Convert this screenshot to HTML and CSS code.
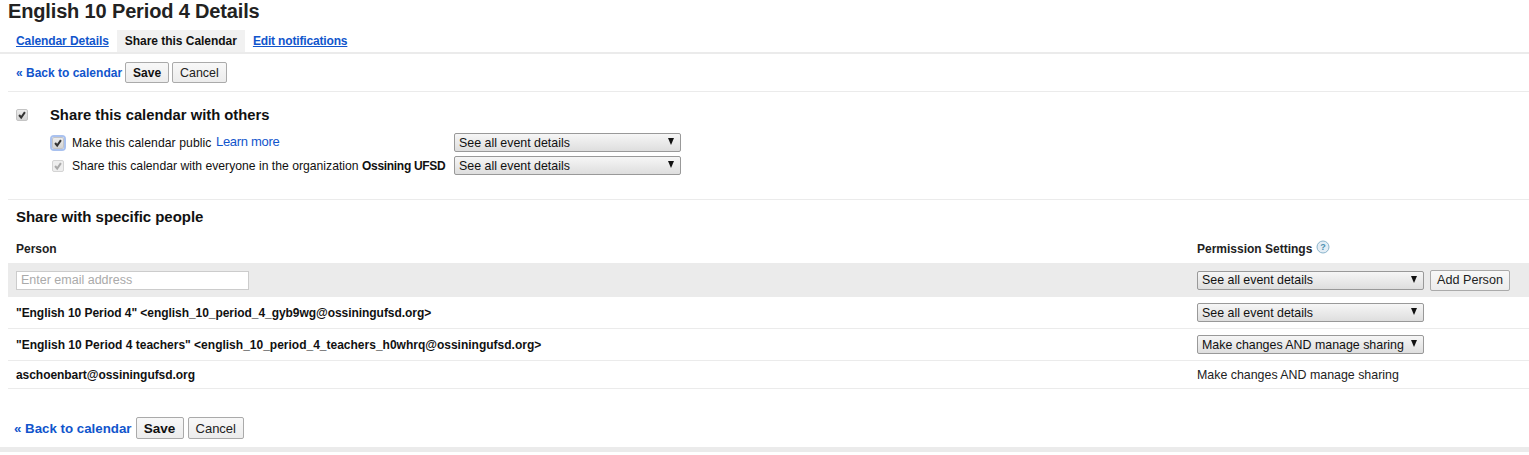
FILE: index.html
```html
<!DOCTYPE html>
<html lang="en">
<head>
  <meta charset="UTF-8">
  <title>English 10 Period 4 Details</title>
  <link rel="stylesheet" href="styles.css">
</head>
<body>

  <h1 class="page-title">English 10 Period 4 Details</h1>

  <!-- Tabs -->
  <div class="tabs">
    <a class="tab" href="#">Calendar Details</a>
    <span class="tab tab-active">Share this Calendar</span>
    <a class="tab tab-tight" href="#">Edit notifications</a>
  </div>

  <div class="toolbar">
    <a class="back-link" href="#">« Back to calendar</a>
    <button class="btn btn-save">Save</button>
    <button class="btn">Cancel</button>
  </div>

  <!-- Share with others -->
  <div class="share-section">
    <div class="share-head">
      <span class="check">
        <svg viewBox="0 0 12 12"><path d="M2.5 6 L5 9 L9.5 2.5" /></svg>
      </span>
      <h3 class="share-title">Share this calendar with others</h3>
    </div>
    <div class="share-row">
      <span class="check check-focus">
        <svg viewBox="0 0 12 12"><path d="M2.5 6 L5 9 L9.5 2.5" /></svg>
      </span>
      <span class="share-label share-label-public">Make this calendar public <a class="learn-more" href="#">Learn more</a></span>
      <div class="select"><span>See all event details</span><i class="arrow"></i></div>
    </div>
    <div class="share-row">
      <span class="check check-disabled">
        <svg viewBox="0 0 12 12"><path d="M2.5 6 L5 9 L9.5 2.5" /></svg>
      </span>
      <span class="share-label">Share this calendar with everyone in the organization <b>Ossining UFSD</b></span>
      <div class="select"><span>See all event details</span><i class="arrow"></i></div>
    </div>
  </div>

  <!-- Share with people -->
  <div class="people-section">
    <h3 class="people-title">Share with specific people</h3>

    <div class="people-head">
      <span class="col-person">Person</span>
      <span class="col-perm">Permission Settings
        <svg class="help-icon" viewBox="0 0 14 14">
          <circle cx="7" cy="7" r="6" />
          <text x="7" y="10.2">?</text>
        </svg>
      </span>
    </div>

    <div class="person-row person-add">
      <div class="col-person"><input class="email-input" type="text" placeholder="Enter email address"></div>
      <div class="col-perm">
        <div class="select"><span>See all event details</span><i class="arrow"></i></div>
        <button class="btn btn-add">Add Person</button>
      </div>
    </div>

    <div class="person-row">
      <div class="col-person person-name person-name-tight">"English 10 Period 4" &lt;english_10_period_4_gyb9wg@ossiningufsd.org&gt;</div>
      <div class="col-perm">
        <div class="select"><span>See all event details</span><i class="arrow"></i></div>
      </div>
    </div>

    <div class="person-row">
      <div class="col-person person-name">"English 10 Period 4 teachers" &lt;english_10_period_4_teachers_h0whrq@ossiningufsd.org&gt;</div>
      <div class="col-perm">
        <div class="select"><span>Make changes AND manage sharing</span><i class="arrow"></i></div>
      </div>
    </div>

    <div class="person-row person-owner">
      <div class="col-person person-name person-name-tight">aschoenbart@ossiningufsd.org</div>
      <div class="col-perm">Make changes AND manage sharing</div>
    </div>
  </div>

  <div class="toolbar-bottom">
    <a class="back-link" href="#">« Back to calendar</a>
    <button class="btn btn-save">Save</button>
    <button class="btn">Cancel</button>
  </div>

  <div class="page-foot"></div>

</body>
</html>
```

FILE: styles.css
```css
html, body {
  margin: 0;
  padding: 0;
  overflow: hidden;
}

body {
  font-family: "Liberation Sans", Arial, sans-serif;
  font-size: 13px;
  color: #222;
  background-color: #fff;
}

a {
  color: #15c;
}

.page-title {
  margin: 0;
  padding-left: 8px;
  height: 30px;
  line-height: 22px;
  font-size: 20px;
  font-weight: bold;
  letter-spacing: -0.15px;
  color: #222;
}

.tabs {
  display: flex;
  height: 22px;
  padding-left: 8px;
  border-bottom: 2px solid #ebebeb;
}

.tab {
  padding: 0 8px;
  line-height: 23px;
  font-size: 12px;
  font-weight: bold;
  letter-spacing: -0.08px;
}

.tab-active {
  background-color: #f1f1f1;
  letter-spacing: -0.03px;
  color: #111;
}

.tab-tight {
  letter-spacing: -0.16px;
}

.toolbar {
  display: flex;
  align-items: center;
  gap: 3px;
  height: 37px;
  margin-left: 8px;
  padding-left: 8px;
  border-bottom: 1px solid #ebebeb;
}

.back-link {
  font-size: 12px;
  font-weight: bold;
  text-decoration: none;
}

.btn {
  height: 21px;
  padding: 0 7px;
  border: 1px solid #aaa;
  border-radius: 2px;
  background: linear-gradient(#f8f8f8, #ececec);
  font-family: inherit;
  font-size: 12.4px;
  color: #222;
}

.btn-save {
  font-size: 12px;
  font-weight: bold;
  color: #111;
}

.share-section {
  margin-left: 8px;
  padding: 15px 0 22px 8px;
  border-bottom: 1px solid #ebebeb;
}

.share-head {
  display: flex;
  align-items: center;
  height: 16px;
  margin-bottom: 8px;
}

.share-title {
  margin: 0 0 0 22px;
  font-size: 14.8px;
  font-weight: bold;
  color: #111;
}

.check {
  display: flex;
  flex: none;
  box-sizing: border-box;
  width: 12px;
  height: 12px;
  border: 1px solid #c4c4c4;
  border-radius: 2px;
  background: linear-gradient(#ededed, #d4d4d4);
}

.check svg {
  width: 10px;
  height: 10px;
  fill: none;
  stroke: #333;
  stroke-width: 2.4;
}

.check-focus {
  outline: 2px solid #a9c1ef;
}

.check-disabled {
  background: #eee;
  border-color: #d4d4d4;
}

.check-disabled svg {
  stroke: #aaa;
}

.share-row {
  display: flex;
  align-items: center;
  height: 23px;
  padding-left: 36px;
}

.share-label {
  width: 382px;
  margin-left: 8px;
  font-size: 12.2px;
  white-space: nowrap;
  color: #111;
}

.share-label b {
  font-size: 12px;
  letter-spacing: -0.3px;
}

.share-label-public {
  letter-spacing: 0.08px;
}

.learn-more {
  position: relative;
  top: -1px;
  margin-left: 1px;
  font-size: 13px;
  letter-spacing: -0.3px;
  text-decoration: none;
}

.select {
  display: flex;
  box-sizing: border-box;
  align-items: center;
  justify-content: space-between;
  width: 227px;
  height: 19px;
  padding: 0 6px 0 4px;
  border: 1px solid #999;
  border-radius: 2px;
  background: linear-gradient(#f6f6f6, #dedede);
  font-size: 12.4px;
  white-space: nowrap;
  color: #111;
}

.arrow {
  width: 0;
  height: 0;
  margin-top: -2px;
  border-left: 3.5px solid transparent;
  border-right: 3.5px solid transparent;
  border-top: 7px solid #111;
}

.people-section {
  margin-left: 8px;
}

.people-title {
  margin: 0;
  padding: 8px 0 0 8px;
  height: 25px;
  font-size: 15px;
  letter-spacing: -0.04px;
  line-height: 18px;
  color: #111;
}

.people-head {
  display: flex;
  align-items: center;
  box-sizing: border-box;
  height: 30px;
  padding-top: 2px;
  font-size: 12px;
  font-weight: bold;
}

.col-person {
  flex: none;
  width: 1189px;
  padding-left: 8px;
  box-sizing: border-box;
}

.col-perm {
  display: flex;
  align-items: center;
  gap: 6px;
}

.help-icon {
  width: 14px;
  height: 14px;
  margin-top: -5px;
  margin-left: -2px;
}

.help-icon circle {
  fill: #e3edf5;
  stroke: #8ab4cc;
}

.help-icon text {
  font-size: 9px;
  font-weight: bold;
  text-anchor: middle;
  fill: #4a8fb0;
}

.person-row {
  display: flex;
  align-items: center;
  height: 31px;
  border-bottom: 1px solid #ebebeb;
  font-size: 12.4px;
}

.person-add {
  height: 32px;
  padding-top: 1px;
  background-color: #ebebeb;
}

.person-owner {
  height: 27px;
}

.person-name {
  font-size: 12px;
  font-weight: bold;
  color: #111;
}

.person-name-tight {
  letter-spacing: -0.05px;
}

.email-input {
  display: block;
  box-sizing: border-box;
  width: 233px;
  height: 19px;
  padding: 0 4px;
  border: 1px solid #ccc;
  background-color: #fff;
  font-family: inherit;
  font-size: 12.5px;
}

.email-input::placeholder {
  color: #aaa;
}

.btn-add {
  width: 80px;
  padding: 0;
  font-size: 12.6px;
}

.toolbar-bottom {
  display: flex;
  align-items: center;
  gap: 4px;
  height: 22px;
  margin-top: 28px;
  padding-left: 14px;
}

.toolbar-bottom .back-link {
  font-size: 13.3px;
}

.toolbar-bottom .btn {
  height: 22px;
  font-size: 13px;
}

.toolbar-bottom .btn-save {
  width: 48px;
  padding: 0;
  font-size: 13.5px;
}

.page-foot {
  height: 5px;
  margin-top: 8px;
  background-color: #ebebeb;
}
```
